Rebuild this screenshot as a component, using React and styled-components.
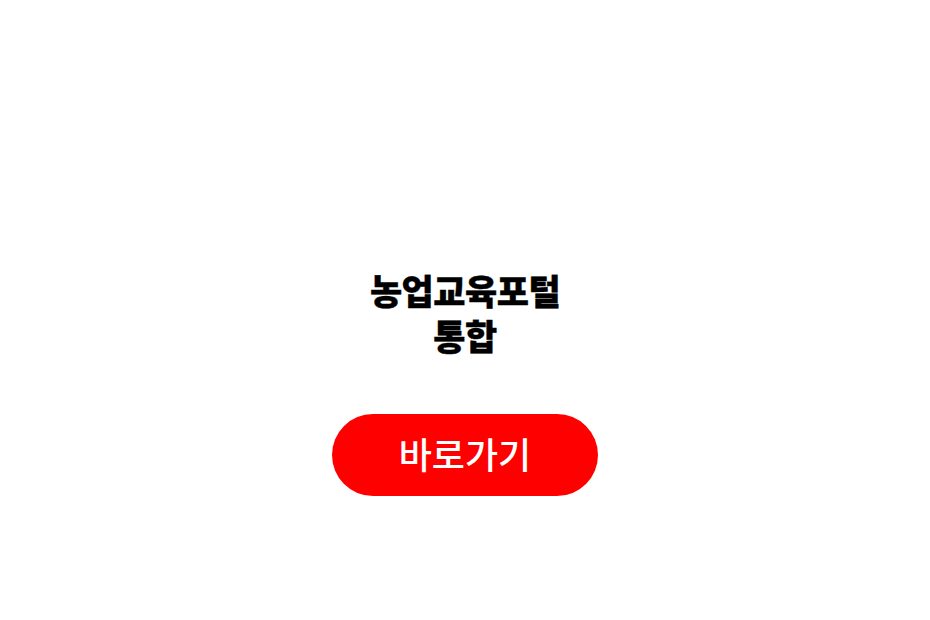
import React from 'react'
import styled, { createGlobalStyle } from 'styled-components'

const GlobalStyle = createGlobalStyle`
  html, body {
    margin: 0;
    padding: 0;
    background: #fff;
  }
  body {
    font-family: "Noto Sans CJK KR", "Noto Sans", sans-serif;
  }
`

const Page = styled.div`
  width: 930px;
  height: 620px;
  display: flex;
  flex-direction: column;
  align-items: center;
  padding-top: 267px;
  box-sizing: border-box;
`

const Title = styled.h1`
  margin: 0;
  font-family: "Noto Sans CJK KR", sans-serif;
  font-size: 35px;
  font-weight: 900;
  line-height: 45px;
  letter-spacing: -0.5px;
  color: #000;
  text-align: center;
  -webkit-text-stroke: 0.4px #000;
`

const GoButton = styled.button`
  margin-top: 57px;
  width: 266px;
  height: 82px;
  border: none;
  border-radius: 41px;
  background: #ff0000;
  color: #fff;
  font-family: "Noto Sans CJK KR", sans-serif;
  font-size: 36px;
  font-weight: 500;
  letter-spacing: 0;
  padding: 0 0 4px;
  cursor: pointer;
`

const App = () => {
  return (
    <>
      <GlobalStyle />
      <Page>
        <Title>
          농업교육포털
          <br />
          통합
        </Title>
        <GoButton>바로가기</GoButton>
      </Page>
    </>
  )
}

export default App
